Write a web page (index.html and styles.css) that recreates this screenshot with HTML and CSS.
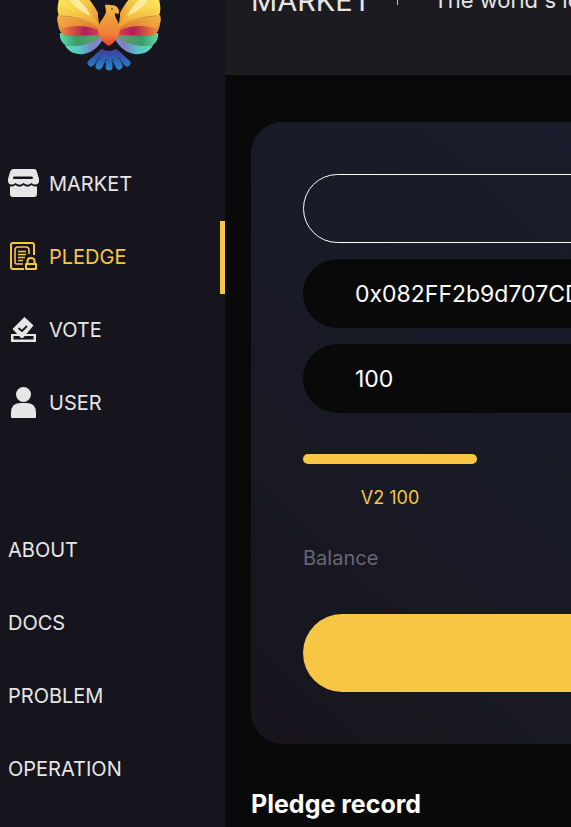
FILE: index.html
```
<!DOCTYPE html>
<html lang="en">
<head>
<meta charset="utf-8">
<meta name="viewport" content="width=device-width, initial-scale=1">
<title>Pledge</title>
<link rel="stylesheet" href="styles.css">
</head>
<body>
<div class="shell">
  <aside class="sidebar">
    <a class="logo" href="#" aria-label="Home">
      <svg viewBox="0 0 106 86" width="106" height="86" aria-hidden="true">
        <defs>
          <linearGradient id="gold" x1="0" y1="0" x2="1" y2="1"><stop offset="0" stop-color="#ffee62"/><stop offset=".5" stop-color="#f8d24a"/><stop offset="1" stop-color="#eea138"/></linearGradient>
          <linearGradient id="amber" x1="0" y1="0" x2="1" y2="1"><stop offset="0" stop-color="#fbe25a"/><stop offset=".6" stop-color="#f2bd43"/><stop offset="1" stop-color="#e98e35"/></linearGradient>
          <linearGradient id="orange" x1="0" y1="0" x2="1" y2=".4"><stop offset="0" stop-color="#f3b542"/><stop offset="1" stop-color="#e27a33"/></linearGradient>
          <linearGradient id="red" x1="0" y1="0" x2="1" y2="0"><stop offset="0" stop-color="#eb983c"/><stop offset=".35" stop-color="#d9503f"/><stop offset=".65" stop-color="#ad1f5c"/><stop offset="1" stop-color="#d8434a"/></linearGradient>
          <linearGradient id="green" x1="0" y1="0" x2="1" y2="0"><stop offset="0" stop-color="#5bdcae"/><stop offset=".4" stop-color="#3e9968"/><stop offset="1" stop-color="#6a9c6a"/></linearGradient>
          <linearGradient id="teal" x1="0" y1="0" x2="1" y2="0"><stop offset="0" stop-color="#63dcb2"/><stop offset=".4" stop-color="#58c2cc"/><stop offset=".75" stop-color="#7d80c2"/><stop offset="1" stop-color="#7d93cc"/></linearGradient>
          <linearGradient id="body" x1="0" y1="0" x2="0" y2="1"><stop offset="0" stop-color="#f4b440"/><stop offset=".7" stop-color="#ef8238"/><stop offset="1" stop-color="#e33c2f"/></linearGradient>
          <linearGradient id="tail" gradientUnits="userSpaceOnUse" x1="0" y1="64" x2="0" y2="85"><stop offset="0" stop-color="#45389b"/><stop offset=".5" stop-color="#2c63b4"/><stop offset="1" stop-color="#2b86cd"/></linearGradient>
          <g id="wing">
            <path d="M9 60C12 67 20 70 28 69C38 67 44 60 47 54L42 50C32 54 22 63 9 60Z" fill="url(#teal)"/>
            <path d="M4 48C3 54 7 60 12 61C26 62 37 58 45 52L42 47Z" fill="url(#green)"/>
            <path d="M2 39C3 47 7 51 13 51L44 50L42 40Z" fill="url(#red)"/>
            <path d="M2 30C0 36 2 41 7 43C20 40 32 40 44 46L43 38Z" fill="url(#orange)"/>
            <path d="M3 15C1 22 1 28 4 32C18 32 32 36 43 44L42 32Z" fill="url(#amber)"/>
            <path d="M8 0C4 5 2 13 3 20C15 27 32 30 43 42L42 31C34 18 27 6 8 0Z" fill="url(#gold)"/>
            <path d="M12 9C13 19 24 26 34 31C32 23 24 14 12 9Z" fill="#ffea9a"/>
            <path d="M18 3C22 17 33 23 42 38L42 28C37 18 29 7 18 3Z" fill="url(#amber)"/>
            <path d="M4 31C16 31 31 34 43 44" fill="none" stroke="#dd8334" stroke-width="1"/>
          </g>
        </defs>
        <use href="#wing"/>
        <use href="#wing" transform="translate(106 0) scale(-1 1)"/>
        <path d="M49 20C54 19 61 21 63 27L62 29L59 28C58 33 64 37 64 44C63 53 58 58 53 61C47 58 43 53 42 45C41 38 50 32 50 26Z" fill="url(#body)"/>
        <path d="M49 20L54 21C59 19 62 22 63 26L62 29L59 27L52 28Z" fill="#f3b241"/>
        <circle cx="56" cy="24" r="1" fill="#8b4b22"/>
        <path d="M46 64L53 67L60 64L66 71L60 78H46L40 71Z" fill="url(#tail)"/>
        <path d="M46 68L35 78M49 69L43 81M53 69L53.100 82M57 69L63 81M60 68L71 78" fill="none" stroke="url(#tail)" stroke-width="7" stroke-linecap="round"/>
        <path d="M44 72L38 80M50 74L48 83M56 74L58 83M62 72L68 80" fill="none" stroke="#16141d" stroke-width=".600"/>
      </svg>
    </a>
    <nav class="nav" aria-label="Main">
      <a class="nav-link" href="#">
        <svg class="icon" viewBox="0 0 32 32" aria-hidden="true">
          <path fill="currentColor" fill-rule="evenodd" d="M6 1H26Q28.500 1 29 4L31 11Q31.600 16 28 16.500Q25.500 17 23.500 15Q19.500 18.500 15.500 15Q11.500 18.500 7.500 15Q5.500 17 3 16.500Q-.6 16 0 11L2 4Q3 1 6 1ZM6 8.500Q5 8.500 5 10Q5 11 6 11H24Q25 11 25 10Q25 8.500 24 8.500Z"/>
          <path fill="currentColor" d="M2 18.500Q5 19 7.500 17Q11.500 20.500 15.500 17Q19.500 20.500 23.500 17Q26 19 29 18.500V26Q29 29 26 29H5Q2 29 2 26Z"/>
        </svg>
        <span>MARKET</span>
      </a>
      <a class="nav-link active" href="#" aria-current="page">
        <svg class="icon" viewBox="0 0 32 32" fill="none" stroke="currentColor" stroke-width="2" stroke-linejoin="round" aria-hidden="true">
          <path d="M26 14V4Q26 2 24 2H5Q3 2 3 4V26Q3 28 5 28H16"/>
          <path stroke-width="1.600" d="M21 13V9Q21 6 18 6H10Q7 6 7 9V21Q7 23 9 23H15"/>
          <path stroke-width="1.600" d="M10 10.500H18M10 13.500H18M10 16.500H17M10 19.500H15"/>
          <path d="M18 23H28V28H18ZM19.500 23V20Q19.500 17 23 17Q26.500 17 26.500 20V23"/>
        </svg>
        <span>PLEDGE</span>
      </a>
      <a class="nav-link" href="#">
        <svg class="icon" viewBox="0 0 32 32" aria-hidden="true">
          <path fill="currentColor" fill-rule="evenodd" d="M3 20H28V28H3ZM5.500 22V25.500H25.500V22Z"/>
          <path fill="currentColor" d="M16.500 3L25.500 11.500L15 24H13L4.500 15Z"/>
          <path fill="none" stroke="#16141d" stroke-width="1.800" d="M10.500 14L14 17L19 12"/>
        </svg>
        <span>VOTE</span>
      </a>
      <a class="nav-link" href="#">
        <svg class="icon" viewBox="0 0 32 32" fill="currentColor" aria-hidden="true">
          <circle cx="15.500" cy="7.500" r="7.500"/>
          <path d="M3 30V26Q3 16 12 16H19Q28 16 28 26V30Q28 31 27 31H4Q3 31 3 30Z"/>
        </svg>
        <span>USER</span>
      </a>
    </nav>
    <nav class="nav" aria-label="Information">
      <a class="nav-link" href="#">ABOUT</a>
      <a class="nav-link" href="#">DOCS</a>
      <a class="nav-link" href="#">PROBLEM</a>
      <a class="nav-link" href="#">OPERATION</a>
    </nav>
  </aside>
  <div class="page">
    <header class="topbar">
      <span class="section">MARKET</span>
      <span class="divider"></span>
      <span class="tagline">The world's lo</span>
    </header>
    <main class="content">
      <form class="card">
        <div class="fields">
          <button class="field outline" type="button" aria-label="Select"></button>
          <input class="field" type="text" aria-label="Address" value="0x082FF2b9d707CD">
          <input class="field" type="text" aria-label="Amount" value="100">
        </div>
        <div class="tier">
          <div class="tier-bar"></div>
          <span>V2 100</span>
        </div>
        <p class="balance">Balance</p>
        <button class="submit" type="button" aria-label="Pledge"></button>
      </form>
      <h2 class="record">Pledge record</h2>
    </main>
  </div>
</div>
</body>
</html>
```
FILE: styles.css
```
* {
  box-sizing: border-box;
}

body {
  margin: 0;
  overflow: hidden;
  background: #090909;
  color: #fff;
  font-family: Inter, "Liberation Sans", sans-serif;
  font-size: 20px;
}

/* The view rests partway down the top bar. */
.shell {
  display: flex;
  min-height: calc(100vh + 75px);
  margin-top: -75px;
}

.sidebar {
  display: flex;
  flex: 0 0 225px;
  flex-direction: column;
  background: #16141d;
}

.logo {
  display: block;
  height: 148px;
  margin-bottom: 75px;
  padding: 60px 0 0 56px;
}

.logo svg {
  display: block;
}

.nav {
  display: flex;
  flex-direction: column;
  height: 291px;
}

.nav + .nav {
  margin-top: 75px;
}

.nav-link {
  display: flex;
  flex: 1;
  align-items: center;
  gap: 9px;
  padding-left: 8px;
  border-right: 5px solid transparent;
  color: #e6e6e6;
  text-decoration: none;
}

.nav-link.active {
  border-color: #f7c644;
  color: #f7c644;
}

.icon {
  width: 32px;
  height: 32px;
}

.page {
  flex: 1;
  min-width: 0;
  overflow: hidden;
}

.topbar {
  display: flex;
  align-items: center;
  height: 150px;
  padding-left: 26px;
  background: #1c1b1f;
  color: #e6e6e6;
  white-space: nowrap;
}

.section {
  font-size: 29px;
}

.divider {
  flex: none;
  width: 1px;
  height: 10px;
  margin: 0 36px 0 25px;
  background: #f7c644;
}

.tagline {
  font-size: 22px;
}

.content {
  min-width: 720px;
  padding: 47px 26px 0;
}

.card {
  padding: 52px;
  border-radius: 32px;
  background: linear-gradient(to top right, #17141c, #191a26 35%, #1b1e2e);
}

.fields {
  display: grid;
  gap: 16px;
}

.field {
  width: 100%;
  height: 69px;
  padding: 0 52px;
  border: 0;
  border-radius: 35px;
  background: #090909;
  color: #fff;
  font: inherit;
  font-size: 23px;
}

.field.outline {
  border: 1px solid #fff;
  background: none;
}

.tier {
  width: 174px;
  margin-top: 41px;
  color: #f7c644;
  font-size: 18px;
  line-height: 22px;
  text-align: center;
}

.tier-bar {
  height: 10px;
  margin-bottom: 23px;
  border-radius: 5px;
  background: #f7c644;
}

.balance {
  margin: 36px 0 43px;
  color: #646875;
  line-height: 26px;
}

.submit {
  display: block;
  width: 100%;
  height: 78px;
  border: 0;
  border-radius: 39px;
  background: #f7c644;
}

.record {
  margin: 44px 0 0;
  font-size: 25px;
  font-weight: 700;
  line-height: 32px;
}
```
